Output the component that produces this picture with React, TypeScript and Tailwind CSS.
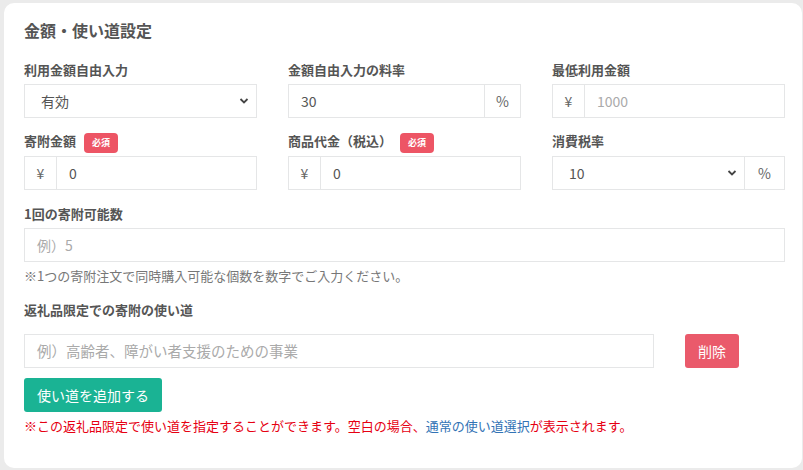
import type { ReactNode } from 'react';

function Chevron() {
  return (
    <svg width="10" height="10" viewBox="0 0 10 10" className="pointer-events-none">
      <polyline points="1.5,3 5,6.5 8.5,3" fill="none" stroke="#444" strokeWidth="1.8" />
    </svg>
  );
}

function Badge() {
  return (
    <span className="ml-2 mt-[2px] flex h-5 w-[34px] items-center justify-center rounded-[4px] bg-[#ed5565] text-[9px] font-bold text-white">
      必須
    </span>
  );
}

function Label({ children, badge, tall }: { children: ReactNode; badge?: boolean; tall?: boolean }) {
  return (
    <div className={`flex items-start ${badge || tall ? 'mb-[3px] h-[22px]' : 'mb-1 h-5'}`}>
      <span className="text-[13px] leading-5 font-bold text-[#555]">{children}</span>
      {badge && <Badge />}
    </div>
  );
}

function Addon({ children, w }: { children: ReactNode; w: string }) {
  return <span className={`flex shrink-0 items-center justify-center text-[14px] text-[#666] ${w}`}>{children}</span>;
}

export default function App() {
  return (
    <div className="h-[470px] bg-[#ebebeb] pt-[3px] pr-[1px] pl-[4px] font-['Noto_Sans_CJK_JP','Noto_Sans',sans-serif]">
      <div className="h-[465px] rounded-[10px] bg-white pt-[17px] pr-[17px] pl-5">
        <h2 className="mb-5 text-[16px] leading-5 font-bold text-[#555]">金額・使い道設定</h2>

        <div className="grid grid-cols-3 gap-x-[31px]">
          <div>
            <Label>利用金額自由入力</Label>
            <div className="flex h-[34px] items-center justify-between border border-[#e5e6e7] pr-[7px] pl-4 text-[14px] text-[#555]">
              <span>有効</span>
              <Chevron />
            </div>
          </div>
          <div>
            <Label>金額自由入力の料率</Label>
            <div className="flex h-[34px] border border-[#e5e6e7]">
              <span className="flex flex-1 items-center px-3 text-[14px] text-[#555]">30</span>
              <Addon w="w-9 border-l border-[#e5e6e7]">%</Addon>
            </div>
          </div>
          <div>
            <Label>最低利用金額</Label>
            <div className="flex h-[34px] border border-[#e5e6e7]">
              <Addon w="w-[32px] border-r border-[#e5e6e7]">¥</Addon>
              <span className="flex flex-1 items-center px-3 text-[14px] text-[#aaa]">1000</span>
            </div>
          </div>

          <div className="mt-[13px]">
            <Label badge>寄附金額</Label>
            <div className="flex h-[34px] border border-[#e5e6e7]">
              <Addon w="w-[32px] border-r border-[#e5e6e7]">¥</Addon>
              <span className="flex flex-1 items-center px-3 text-[14px] text-[#555]">0</span>
            </div>
          </div>
          <div className="mt-[13px]">
            <Label badge>商品代金（税込）</Label>
            <div className="flex h-[34px] border border-[#e5e6e7]">
              <Addon w="w-[32px] border-r border-[#e5e6e7]">¥</Addon>
              <span className="flex flex-1 items-center px-3 text-[14px] text-[#555]">0</span>
            </div>
          </div>
          <div className="mt-[13px]">
            <Label tall>消費税率</Label>
            <div className="flex h-[34px] border border-[#e5e6e7]">
              <div className="flex flex-1 items-center justify-between pr-[7px] pl-4 text-[14px] text-[#555]">
                <span>10</span>
                <Chevron />
              </div>
              <Addon w="w-[40px] border-l border-[#e5e6e7]">%</Addon>
            </div>
          </div>
        </div>

        <div className="mt-[14px]">
          <Label>1回の寄附可能数</Label>
          <div className="flex h-[34px] items-center border border-[#e5e6e7] px-3 text-[14px] text-[#aaa]">例）5</div>
          <p className="mt-1 text-[13px] leading-5 text-[#777]">※1つの寄附注文で同時購入可能な個数を数字でご入力ください。</p>
        </div>

        <div className="mt-[14px]">
          <div className="mb-[14px] text-[13px] leading-5 font-bold text-[#555]">返礼品限定での寄附の使い道</div>
          <div className="flex items-center gap-[31px]">
            <div className="flex h-[34px] w-[630px] items-center border border-[#e5e6e7] px-3 text-[14.5px] text-[#aaa]">
              例）高齢者、障がい者支援のための事業
            </div>
            <button className="h-[34px] w-[54px] rounded-[3px] bg-[#ea5a6b] text-[14px] text-white">削除</button>
          </div>
          <button className="mt-[10px] h-[34px] w-[138px] rounded-[3px] bg-[#1ab394] text-[14px] text-white">使い道を追加する</button>
          <p className="mt-1 text-[13px] leading-5 text-[#e60012]">
            ※この返礼品限定で使い道を指定することができます。空白の場合、
            <span className="text-[#3273b5]">通常の使い道選択</span>
            が表示されます。
          </p>
        </div>
      </div>
    </div>
  );
}
